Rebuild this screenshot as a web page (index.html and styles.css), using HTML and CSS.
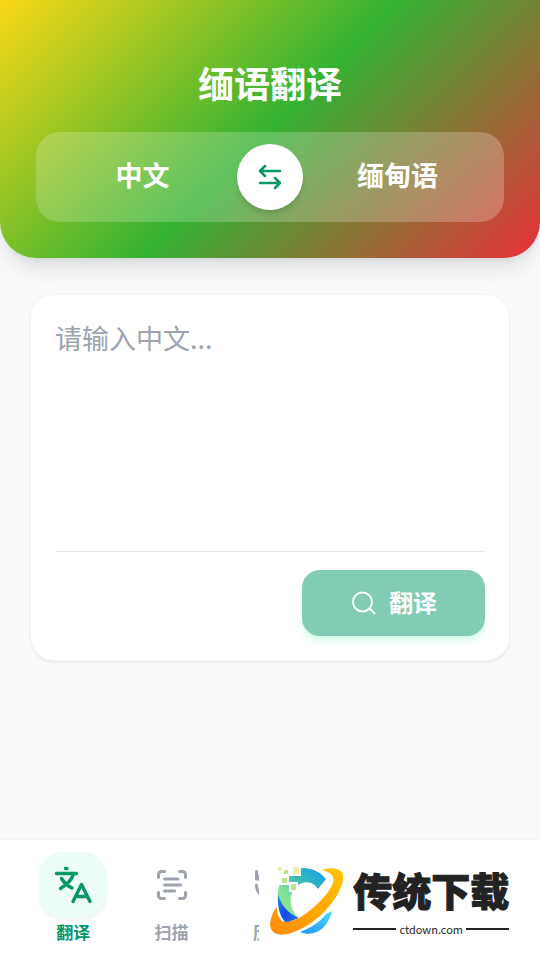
FILE: index.html
```html
<!DOCTYPE html>
<html lang="zh-CN">
<head>
<meta charset="utf-8">
<meta name="viewport" content="width=device-width, initial-scale=1">
<title>缅语翻译</title>
<link rel="stylesheet" href="styles.css">
</head>
<body>
<div class="app">
  <header class="hero">
    <h1 class="hero-title">缅语翻译</h1>
    <div class="lang-bar">
      <button class="lang" type="button">中文</button>
      <button class="swap" type="button" aria-label="切换语言">
        <svg class="swap-icon" viewBox="0 0 30 30" aria-hidden="true"><path d="M25 9H5M10 4L5 9l5 5M5 21h20M20 16l5 5-5 5"/></svg>
      </button>
      <button class="lang" type="button">缅甸语</button>
    </div>
  </header>

  <main class="content">
    <form class="card">
      <textarea class="source" aria-label="原文" placeholder="请输入中文..."></textarea>
      <div class="card-footer">
        <button class="translate" type="button">
          <svg class="search-icon" viewBox="0 0 24 24" aria-hidden="true"><circle cx="10.500" cy="11" r="9.500"/><path d="M17.500 17.500L22.500 22.500"/></svg>
          <span class="translate-label">翻译</span>
        </button>
      </div>
    </form>
  </main>

  <nav class="tabs">
    <a class="tab active" href="#translate">
      <span class="tab-icon"><svg viewBox="0 0 36 36" aria-hidden="true"><path d="M1.500 6.500H21.500M10.500 1.500H12M18.500 7C17 12 12 17.500 5.500 21.500M6.500 11.500C9 15.500 13 19 17 21M18 34.500L26.500 17.500L35 34.500M21 29.500H32"/></svg></span>
      <span>翻译</span>
    </a>
    <a class="tab" href="#scan">
      <span class="tab-icon"><svg viewBox="0 0 36 36" aria-hidden="true"><path d="M4.500 10.500v-3a3 3 0 0 1 3-3h3M25.500 4.500h3a3 3 0 0 1 3 3v3M31.500 25.500v3a3 3 0 0 1-3 3h-3M10.500 31.500h-3a3 3 0 0 1-3-3v-3M10.500 12h13.500M10.500 18h16M10.500 24h10"/></svg></span>
      <span>扫描</span>
    </a>
    <a class="tab" href="#history">
      <span class="tab-icon"><svg viewBox="0 0 36 36" aria-hidden="true"><path d="M4.500 18a13.500 13.500 0 1 0 13.500-13.500a14.600 14.600 0 0 0-10 4L4.500 12M4.500 4.500v7.500h7.500M18 10.500v7.500l6 3"/></svg></span>
      <span>历史</span>
    </a>
    <div class="brand">
      <svg class="brand-logo" viewBox="0 0 82 78" aria-hidden="true">
        <defs>
          <linearGradient id="ring" x1="0" y1="1" x2="1" y2="0"><stop offset="0" stop-color="#ff8a0c"/><stop offset="1" stop-color="#ffc400"/></linearGradient>
          <linearGradient id="arc" x1="0" y1="1" x2="1" y2="0"><stop offset="0" stop-color="#9cec7c"/><stop offset=".35" stop-color="#7ce098"/><stop offset=".6" stop-color="#38bcb8"/><stop offset="1" stop-color="#109cf0"/></linearGradient>
          <linearGradient id="tail" x1="0" y1="0" x2="1" y2="1"><stop offset="0" stop-color="#2890e8"/><stop offset=".5" stop-color="#1848e8"/><stop offset="1" stop-color="#2478ff"/></linearGradient>
          <linearGradient id="wave" x1="0" y1="1" x2="1" y2="0"><stop offset="0" stop-color="#2492f8"/><stop offset="1" stop-color="#48dcff"/></linearGradient>
        </defs>
        <path fill="url(#arc)" d="M61 18C50 4 30 4 20 14C11 25 10 42 20 54L33 57C24 47 23 34 31 26C38 19 48 20 53 28Z"/>
        <path fill="url(#tail)" d="M13 33C12 46 15 56 21 62L34 57C24 53 16 45 13 33Z"/>
        <path fill="url(#wave)" d="M35 71C46 67 56 60 61 53L67 50C63 67 50 77 35 71Z"/>
        <path fill="url(#ring)" d="M57 9C68 5 80 7 78 19C75 37 52 64 26 72C11 77 2 70 6 58C7 53 9 49 12 46C12 51 13 55 15 58C18 63 25 61 34 57C48 49 64 33 68 22C70 14 65 11 57 9Z"/>
        <path fill="#fff" d="M15 15h9v9h-9zM18 7h8v8h-8zM24 21h9v10h-9zM26 4h10v11h-10z"/>
        <path fill="#bce58c" d="M17 17h5v5h-5zM19 9h4v4h-4zM26 23h5v6h-5z"/>
        <path fill="#e6f2a0" d="M28 6h6v7h-6zM13 6h3v4h-3z"/>
      </svg>
      <div class="brand-copy">
        <strong class="brand-name">传统下载</strong>
        <span class="brand-site">ctdown.com</span>
      </div>
    </div>
  </nav>
</div>
</body>
</html>
```

FILE: styles.css
```css
* {
  box-sizing: border-box;
}

body {
  margin: 0;
  background: #f9fafb;
  font-family: "Noto Sans CJK SC", sans-serif;
}

button {
  border: 0;
  padding: 0;
  font: inherit;
  cursor: pointer;
}

svg {
  fill: none;
  stroke-linecap: round;
  stroke-linejoin: round;
}

.app {
  display: flex;
  flex-direction: column;
  min-height: 100vh;
}

.hero {
  padding: 60px 36px 36px;
  border-radius: 0 0 36px 36px;
  background: linear-gradient(135deg, #fad816 0%, #34b233 50%, #ea2f38 100%);
  box-shadow: 0 15px 22px -4px rgba(0, 0, 0, 0.1), 0 6px 9px -6px rgba(0, 0, 0, 0.1);
}

.hero-title {
  margin: 0 0 28px;
  color: #fff;
  font-size: 36px;
  font-weight: 700;
  line-height: 44px;
  text-align: center;
}

.lang-bar {
  display: flex;
  align-items: center;
  padding: 12px;
  border-radius: 24px;
  background: linear-gradient(90deg, rgba(255, 255, 255, 0.2), rgba(255, 255, 255, 0.24));
}

.lang {
  flex: 1;
  padding-bottom: 4px;
  background: none;
  color: #fff;
  font-size: 27px;
  font-weight: 700;
  line-height: 42px;
}

.lang:first-child {
  padding-left: 12px;
}

.lang:last-child {
  padding-right: 12px;
}

.swap {
  display: grid;
  place-items: center;
  width: 66px;
  height: 66px;
  margin: 0 12px;
  border-radius: 50%;
  background: #fff;
  box-shadow: 0 6px 9px -2px rgba(0, 0, 0, 0.12), 0 3px 6px -3px rgba(0, 0, 0, 0.1);
}

.swap-icon {
  width: 30px;
  height: 30px;
  stroke: #059669;
  stroke-width: 2.500;
}

.content {
  flex: 1;
  padding: 36px 30px;
}

.card {
  padding: 24px;
  border: 1px solid #f3f4f6;
  border-radius: 24px;
  background: #fff;
  box-shadow: 0 2px 3px rgba(0, 0, 0, 0.06);
}

.source {
  display: block;
  width: 100%;
  height: 232px;
  padding: 0;
  border: 0;
  outline: 0;
  resize: none;
  background: none;
  color: #1f2937;
  font: 400 27px/38px "Noto Sans CJK SC", sans-serif;
}

.source::placeholder {
  color: #9ca3af;
  opacity: 1;
}

.card-footer {
  display: flex;
  justify-content: flex-end;
  padding-top: 18px;
  border-top: 1px solid #e5e7eb;
}

.translate {
  display: flex;
  align-items: center;
  justify-content: center;
  gap: 13px;
  height: 66px;
  padding: 0 48px 0 50px;
  border-radius: 18px;
  background: #82cbb4;
  box-shadow: 0 6px 9px -2px #d1fae5, 0 3px 6px -3px #d1fae5;
  color: #fff;
  font-size: 24px;
  font-weight: 700;
}

.translate-label {
  padding-bottom: 4px;
}

.search-icon {
  width: 24px;
  height: 24px;
  overflow: visible;
  stroke: #fff;
  stroke-width: 2;
}

.tabs {
  position: relative;
  display: grid;
  grid-template-columns: repeat(5, 1fr);
  height: 121px;
  padding: 12px 24px 0;
  border-top: 1px solid #f3f4f6;
  background: #fff;
}

.tab {
  display: flex;
  flex-direction: column;
  align-items: center;
  gap: 2px;
  color: #9ca3af;
  font-size: 17px;
  font-weight: 700;
  line-height: 24px;
  text-decoration: none;
}

.tab-icon {
  display: grid;
  place-items: center;
  width: 68px;
  height: 66px;
  border-radius: 24px;
}

.tab-icon svg {
  width: 36px;
  height: 36px;
  overflow: visible;
  stroke: currentColor;
  stroke-width: 3;
}

.active {
  color: #059669;
}

.active .tab-icon {
  background: #ecfdf5;
  box-shadow: 0 2px 3px rgba(0, 0, 0, 0.05);
}

.active .tab-icon svg {
  stroke-width: 3.400;
}

.brand {
  position: absolute;
  inset: 0 0 0 auto;
  display: flex;
  align-items: center;
  width: 52%;
  padding-left: 6px;
  background: #fff;
}

.brand-logo {
  flex: none;
  width: 82px;
  height: 78px;
}

.brand-copy {
  display: flex;
  flex-direction: column;
  gap: 6px;
  margin-left: 6px;
}

.brand-name {
  color: #222;
  font-size: 39px;
  font-weight: 900;
  line-height: 52px;
  -webkit-text-stroke: 1px #222;
}

.brand-site {
  display: flex;
  align-items: center;
  gap: 3px;
  color: #222;
  font-size: 11px;
  line-height: 16px;
}

.brand-site::before,
.brand-site::after {
  content: "";
  flex: 1;
  height: 2px;
  background: #222;
}
```
